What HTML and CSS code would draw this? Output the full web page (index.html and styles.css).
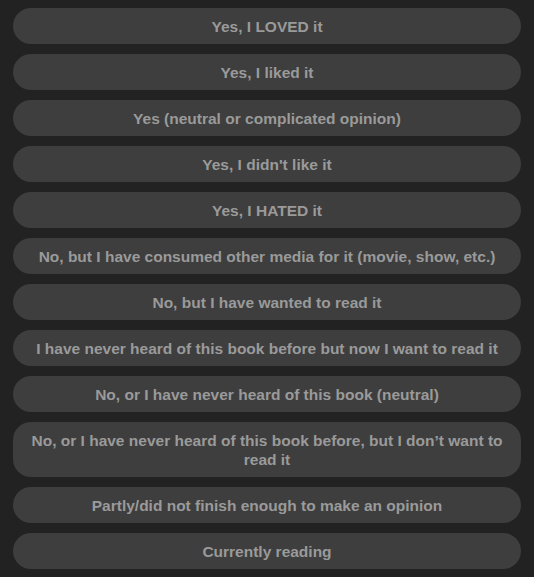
FILE: index.html
```html
<!DOCTYPE html>
<html lang="en">
<head>
<meta charset="utf-8">
<title>Reading poll</title>
<link rel="stylesheet" href="styles.css">
</head>
<body>
<div class="options">
  <button class="option">Yes, I LOVED it</button>
  <button class="option">Yes, I liked it</button>
  <button class="option">Yes (neutral or complicated opinion)</button>
  <button class="option">Yes, I didn't like it</button>
  <button class="option">Yes, I HATED it</button>
  <button class="option">No, but I have consumed other media for it (movie, show, etc.)</button>
  <button class="option">No, but I have wanted to read it</button>
  <button class="option">I have never heard of this book before but now I want to read it</button>
  <button class="option">No, or I have never heard of this book (neutral)</button>
  <button class="option">No, or I have never heard of this book before, but I don’t want to read it</button>
  <button class="option">Partly/did not finish enough to make an opinion</button>
  <button class="option">Currently reading</button>
</div>
</body>
</html>
```
FILE: styles.css
```css
html, body {
  margin: 0;
  background: #222222;
}
body {
  padding: 8px 13px;
  font-family: "Liberation Sans", Arial, sans-serif;
}
.options {
  display: flex;
  flex-direction: column;
  gap: 10px;
}
.option {
  display: block;
  width: 100%;
  border: none;
  background: #3e3e3e;
  color: #9a9a9a;
  font-family: inherit;
  font-weight: bold;
  font-size: 15.5px;
  line-height: 19px;
  padding: 8.5px 18px;
  border-radius: 18px;
  text-align: center;
  cursor: pointer;
}
```
